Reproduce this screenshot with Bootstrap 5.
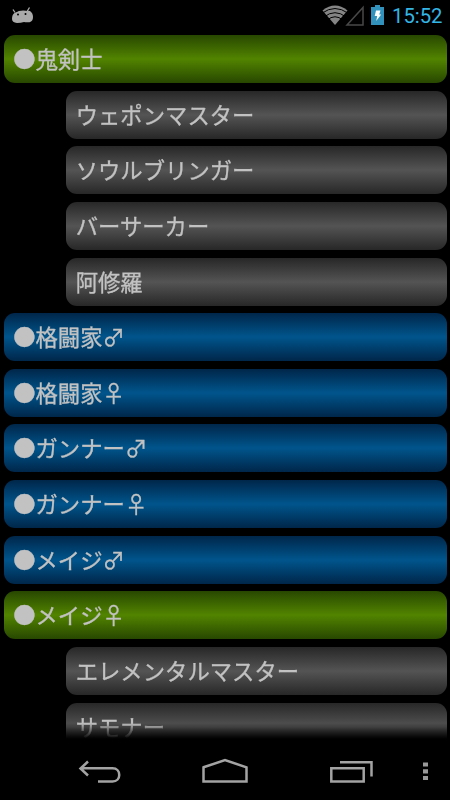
<!DOCTYPE html>
<html lang="ja">
<head>
<meta charset="utf-8">
<meta name="viewport" content="width=device-width, initial-scale=1">
<title>職業一覧</title>
<link href="https://cdn.jsdelivr.net/npm/bootstrap@5.3.0/dist/css/bootstrap.min.css" rel="stylesheet">
<style>
body{background:#000;font-family:"Noto Sans CJK JP",sans-serif}
.screen{height:800px;width:450px}
.statusbar{height:35px;padding:5px 7.500px 0 11px}
.clock{font:400 20.300px/22px Roboto,sans-serif;color:#33b5e5;margin-left:8px}
.jobs{height:704px;padding:0 3.5px;gap:7.63px;-webkit-mask-image:linear-gradient(#000 688px,transparent 704px);mask-image:linear-gradient(#000 688px,transparent 704px)}
.job{height:48px;border-radius:11px;color:#c2c2c2;font-size:22.35px;line-height:47px;padding-left:9.700px;-webkit-text-stroke:.3px #c2c2c2}
.job-open{background:linear-gradient(#274700,#528400 50%,#274700)}
.job-closed{background:linear-gradient(#00264a,#00558c 50%,#00264a)}
.job-sub{background:linear-gradient(#272727,#545454 50%,#272727);margin-left:62.5px}
.navkeys{height:61px}
</style>
</head>
<body>
<div class="screen d-flex flex-column overflow-hidden">
<header class="statusbar d-flex align-items-start flex-shrink-0">
<svg width="23" height="19" viewBox="0 0 23 19"><path d="M2 4.500l2 3M18.500 2.500l-2.500 4" fill="none" stroke="#aaa" stroke-width="1.300"/><path d="M3.500 8Q6 7 8.500 8.500Q11 9 13 7.500Q16 5 19 6Q22 8 22 12Q22 16.500 18.500 17.200Q15 17.500 13 17Q10 18 6 18Q1 17.500 1 14Q1 9.500 3.500 8Z" fill="#aaa"/><path d="M4 8Q10 4 18 6.500V11H4Z" fill="#aaa"/><circle cx="7" cy="9.600" r="1" fill="#000"/><circle cx="14.500" cy="9" r="1" fill="#000"/></svg>
<div class="d-flex ms-auto">
<svg width="62" height="22" viewBox="0 0 62 22"><path d="M.5 5.500Q13 -4.500 25.500 5.500L13 20Z" fill="#858585"/><path d="M0 8.200Q13 -1.200 26 8.200M2 12Q13 3.400 24 12M5 15.200Q13 8.300 21 15.200" fill="none" stroke="#000" stroke-width="1"/><path d="M25 20H41V2.500Z" fill="none" stroke="#484848" stroke-width="1.500"/><path d="M49 2h4V0h5v2h4v18H49Z" fill="#3292bb"/><path d="M54 5.500h4.500l-1.300 4h2l-5 6.500 1-5h-2.500Z" fill="#fff"/></svg>
<span class="clock">15:52</span>
</div>
</header>
<main class="jobs d-flex flex-column overflow-hidden flex-shrink-0">
<div class="job job-open flex-shrink-0">●鬼剣士</div>
<div class="job job-sub flex-shrink-0">ウェポンマスター</div>
<div class="job job-sub flex-shrink-0">ソウルブリンガー</div>
<div class="job job-sub flex-shrink-0">バーサーカー</div>
<div class="job job-sub flex-shrink-0">阿修羅</div>
<div class="job job-closed flex-shrink-0">●格闘家♂</div>
<div class="job job-closed flex-shrink-0">●格闘家♀</div>
<div class="job job-closed flex-shrink-0">●ガンナー♂</div>
<div class="job job-closed flex-shrink-0">●ガンナー♀</div>
<div class="job job-closed flex-shrink-0">●メイジ♂</div>
<div class="job job-open flex-shrink-0">●メイジ♀</div>
<div class="job job-sub flex-shrink-0">エレメンタルマスター</div>
<div class="job job-sub flex-shrink-0">サモナー</div>
</main>
<nav class="navkeys flex-shrink-0" aria-label="system">
<svg class="d-block" width="450" height="61" viewBox="0 739 450 61" fill="none" stroke="#a3a3a3" stroke-width="2.500"><path d="M88 761.500L80.500 768.500L88 775.500M80.500 768.300H112.500C121.500 768.300 121.500 781.500 112.500 781.500H98"/><path d="M203.500 767.300L225 760.100L246.500 767.300V781.500H203.500Z"/><path d="M331.300 768.300H363.700V781.500H331.300ZM340 762.300H371.500V776.500"/><path d="M423 764.500h5M423 771.300h5M423 778h5" stroke="#999" stroke-width="4.200"/></svg>
</nav>
</div>
<script src="https://cdn.jsdelivr.net/npm/bootstrap@5.3.0/dist/js/bootstrap.bundle.min.js"></script>
</body>
</html>
